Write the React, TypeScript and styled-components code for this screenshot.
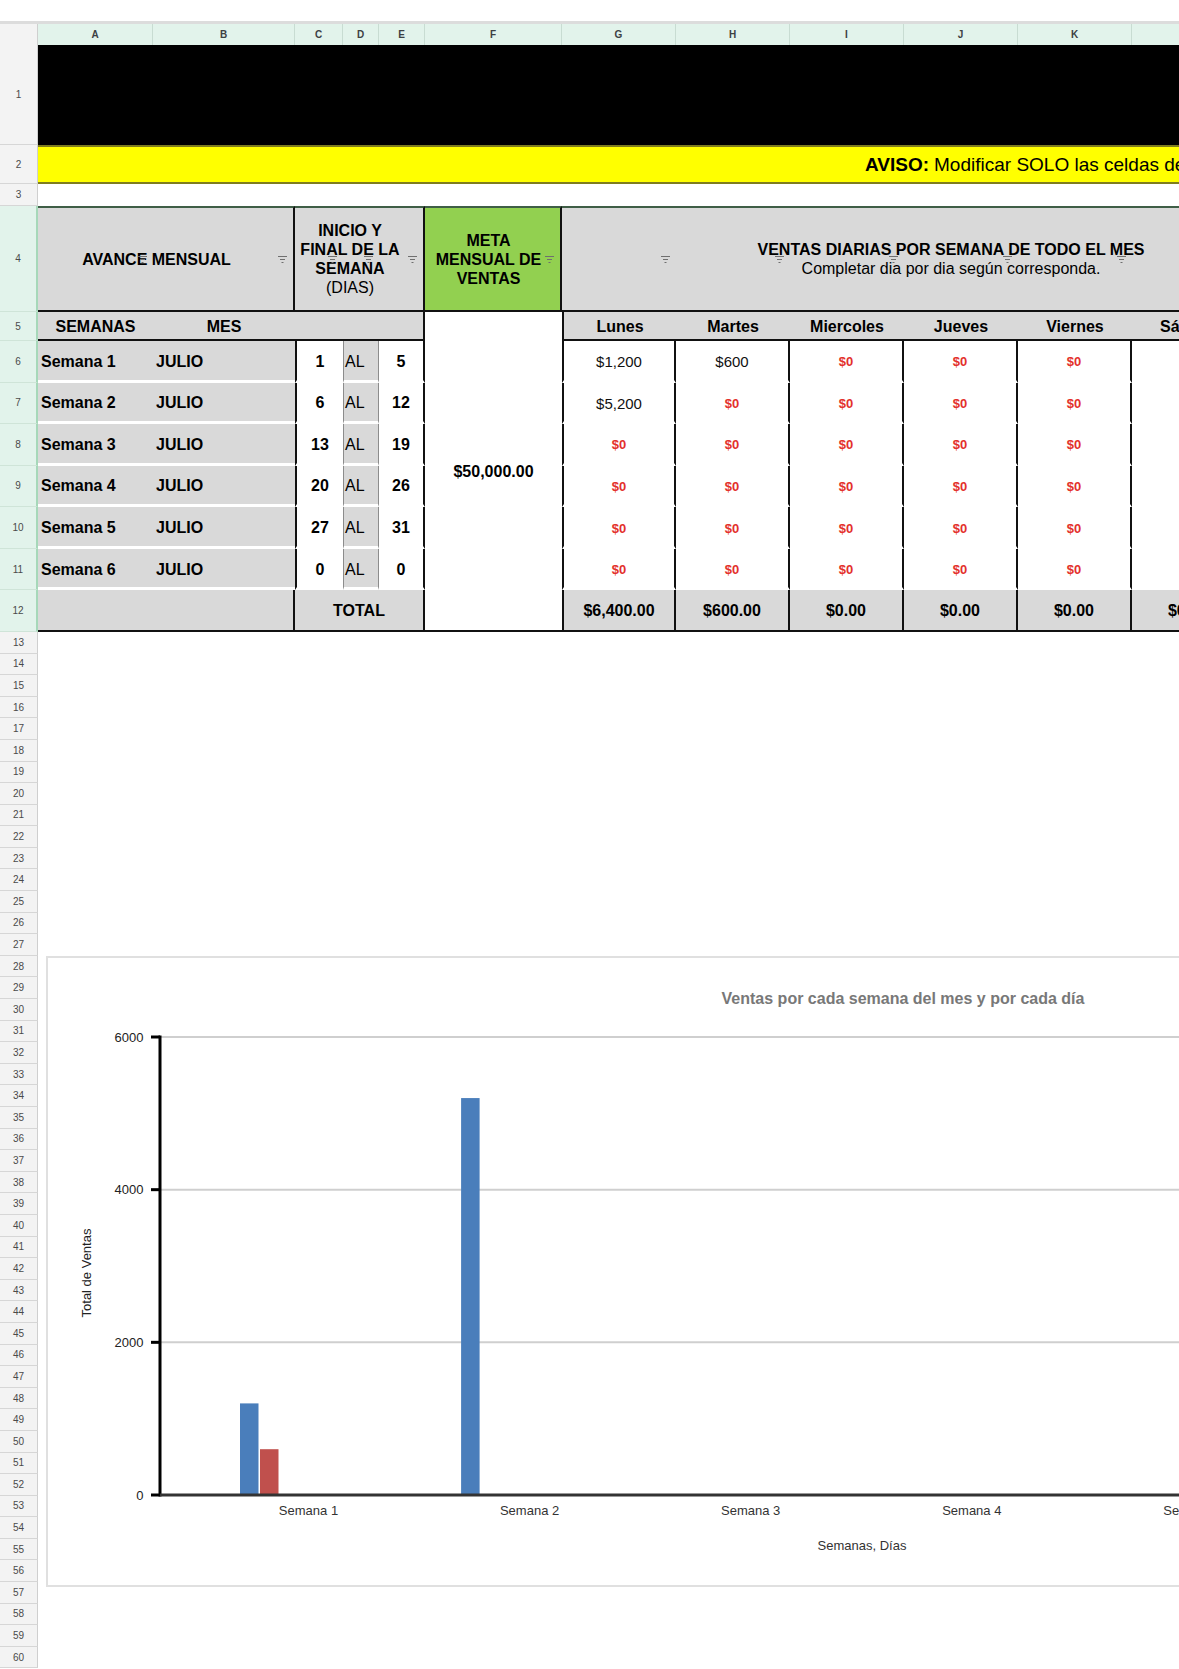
import React from 'react';
import styled, { createGlobalStyle } from 'styled-components';

const GlobalStyle = createGlobalStyle`
  *, *::before, *::after { box-sizing: border-box; }
  html, body { margin: 0; padding: 0; background: #fff; }
  body {
    font-family: 'Liberation Sans', Arial, Helvetica, sans-serif;
    color: #000;
    overflow: hidden;
  }
`;

// widths of columns A..M
const COLS = [115, 142, 48, 36, 46, 137, 114, 114, 114, 114, 114, 114, 114];
const LETTERS = ['A', 'B', 'C', 'D', 'E', 'F', 'G', 'H', 'I', 'J', 'K', 'L', 'M'];
const colTemplate = COLS.map((w) => `${w}px`).join(' ');

const DAYS = ['Lunes', 'Martes', 'Miercoles', 'Jueves', 'Viernes', 'Sábado', 'Domingo'];

const WEEKS = [
  { name: 'Semana 1', from: 1, to: 5, sales: [1200, 600, 0, 0, 0, 0, 0] },
  { name: 'Semana 2', from: 6, to: 12, sales: [5200, 0, 0, 0, 0, 0, 0] },
  { name: 'Semana 3', from: 13, to: 19, sales: [0, 0, 0, 0, 0, 0, 0] },
  { name: 'Semana 4', from: 20, to: 26, sales: [0, 0, 0, 0, 0, 0, 0] },
  { name: 'Semana 5', from: 27, to: 31, sales: [0, 0, 0, 0, 0, 0, 0] },
  { name: 'Semana 6', from: 0, to: 0, sales: [0, 0, 0, 0, 0, 0, 0] },
];

const META = 50000;

const money = (n: number) => '$' + n.toLocaleString('en-US');
const moneyFixed = (n: number) =>
  '$' + n.toLocaleString('en-US', { minimumFractionDigits: 2, maximumFractionDigits: 2 });

const Page = styled.div`
  position: relative;
  width: 1179px;
  height: 1669px;
  overflow: hidden;
  background: #fff;
`;

const TopBar = styled.div`
  height: 24px;
  border-bottom: 3px solid #dcdcdc;
`;

const Sheet = styled.div`
  display: grid;
  grid-template-columns: 38px ${colTemplate};
  grid-template-rows: 21px 100px 39px 22px 106px 29px repeat(7, 41.57px) repeat(48, 21.6px);
  width: max-content;
`;

const Corner = styled.div`
  background: #f3f3f3;
  border-right: 1px solid #cfcfcf;
`;

const ColHead = styled.div`
  display: flex;
  align-items: center;
  justify-content: center;
  background: #e2f3eb;
  border-right: 1px solid #c8dcd2;
  font-size: 10px;
  font-weight: 700;
  color: #3c4043;
`;

const RowHead = styled.div<{ $active?: boolean }>`
  display: flex;
  align-items: center;
  justify-content: center;
  background: ${(p) => (p.$active ? '#e2f3eb' : '#f3f3f3')};
  border-bottom: 1px solid ${(p) => (p.$active ? '#cfe4d8' : '#d6d6d6')};
  border-right: ${(p) => (p.$active ? '2px solid #a6d8b9' : '1px solid #cfcfcf')};
  font-size: 10px;
  color: #4a4a4a;
`;

const Banner = styled.div`
  grid-column: span 13;
  background: #000;
`;

const Notice = styled.div`
  grid-column: span 13;
  display: flex;
  align-items: center;
  padding-left: 827px;
  background: #ffff00;
  border-top: 2px solid #7f7d1f;
  border-bottom: 2px solid #7f7d1f;
  font-size: 19px;
  white-space: nowrap;

  b {
    font-weight: 700;
    margin-right: 5px;
  }
`;

const Blank = styled.div`
  grid-column: span 13;
  background: #fff;
`;

const HeadCell = styled.div<{ $span: number; $green?: boolean; $padR?: number }>`
  position: relative;
  grid-column: span ${(p) => p.$span};
  display: flex;
  flex-direction: column;
  align-items: center;
  justify-content: center;
  padding: 0 ${(p) => p.$padR ?? 20}px 0 2px;
  background: ${(p) => (p.$green ? '#92d050' : '#d9d9d9')};
  border-top: 2px solid #3f5e46;
  border-bottom: 2px solid #111;
  border-right: 2px solid #111;
  font-size: 16px;
  font-weight: 700;
  line-height: 19px;
  text-align: center;
  white-space: nowrap;
`;

const Thin = styled.span`
  font-weight: 400;
`;

const FilterLayer = styled.div<{ $cols: string }>`
  position: absolute;
  inset: 0;
  display: grid;
  grid-template-columns: ${(p) => p.$cols};
  pointer-events: none;
`;

const FilterSlot = styled.div`
  display: flex;
  align-items: center;
  justify-content: flex-end;
  padding-right: 6px;
`;

const SubHead = styled.div<{ $span?: number; $edge?: 'left' | 'right' }>`
  grid-column: span ${(p) => p.$span ?? 1};
  display: flex;
  align-items: center;
  justify-content: center;
  padding-top: 2px;
  background: #d9d9d9;
  border-bottom: 2px solid #111;
  ${(p) => (p.$edge ? `border-${p.$edge}: 2px solid #111;` : '')}
  font-size: 16px;
  font-weight: 700;
  white-space: nowrap;
`;

const GoalCell = styled.div`
  grid-row: span 8;
  display: flex;
  align-items: center;
  justify-content: center;
  padding-top: 2px;
  background: #fff;
  border-bottom: 2px solid #111;
  font-size: 16px;
  font-weight: 700;
`;

const WeekCell = styled.div`
  display: flex;
  align-items: center;
  padding: 3px 0 0 3px;
  background: #d9d9d9;
  border-bottom: 3px solid #fff;
  font-size: 16px;
  font-weight: 700;
  white-space: nowrap;
`;

const DayNum = styled.div<{ $side: 'left' | 'right' }>`
  display: flex;
  align-items: center;
  justify-content: center;
  padding-top: 3px;
  background: #fff;
  border-${(p) => p.$side}: 2px solid #111;
  border-bottom: 3px solid #fff;
  font-size: 16px;
  font-weight: 700;
`;

const AlCell = styled.div`
  display: flex;
  align-items: center;
  padding: 3px 0 0 1px;
  background: #d9d9d9;
  border-left: 1px solid #8c8c8c;
  border-right: 1px solid #8c8c8c;
  border-bottom: 3px solid #fff;
  font-size: 16px;
`;

const SaleCell = styled.div<{ $first?: boolean; $zero?: boolean }>`
  display: flex;
  align-items: center;
  justify-content: center;
  padding-top: 3px;
  background: #fff;
  border-right: 2px solid #111;
  ${(p) => (p.$first ? 'border-left: 2px solid #111;' : '')}
  border-bottom: 3px solid #fff;
  font-size: ${(p) => (p.$zero ? '13px' : '15px')};
  font-weight: ${(p) => (p.$zero ? 700 : 400)};
  color: ${(p) => (p.$zero ? '#e3302b' : '#111')};
`;

const TotalCell = styled.div<{ $span?: number; $first?: boolean }>`
  grid-column: span ${(p) => p.$span ?? 1};
  display: flex;
  align-items: center;
  justify-content: center;
  padding-top: 2px;
  background: #d9d9d9;
  border-right: 2px solid #111;
  border-bottom: 2px solid #111;
  ${(p) => (p.$first ? 'border-left: 2px solid #111;' : '')}
  font-size: 16px;
  font-weight: 700;
  white-space: nowrap;
`;

const EmptyRow = styled.div`
  grid-column: span 13;
  background: #fff;
`;

const ChartCard = styled.div`
  position: absolute;
  left: 46px;
  top: 956px;
  width: 1300px;
  height: 631px;
  background: #fff;
  border: 2px solid #e0e0e0;

  svg {
    display: block;
  }
  text {
    font-family: 'Liberation Sans', Arial, Helvetica, sans-serif;
  }
`;

function FilterIcon() {
  return (
    <svg width="9" height="7" viewBox="0 0 9 7">
      <path d="M0 0.5h9M2 3.5h5M3.5 6.5h2" stroke="#6f6f6f" strokeWidth="1" />
    </svg>
  );
}

// one filter button at the right edge of every column under a merged header
function Filters({ cols }: { cols: number[] }) {
  const template = cols.map((w, i) => (i === cols.length - 1 ? '1fr' : `${w}px`)).join(' ');
  return (
    <FilterLayer $cols={template}>
      {cols.map((_, i) => (
        <FilterSlot key={i}>
          <FilterIcon />
        </FilterSlot>
      ))}
    </FilterLayer>
  );
}

const SERIES = ['#4a7ebb', '#c0504d', '#9bbb59', '#8064a2', '#4bacc6', '#f79646', '#2c4d75'];

function SalesChart() {
  const top = 79;
  const base = 537;
  const max = 6000;
  const y = (v: number) => base - (v / max) * (base - top);
  const axisX = 112;
  const ticks = [0, 2000, 4000, 6000];
  const center = (i: number) => 260.5 + i * 221.1;

  return (
    <ChartCard>
      <svg width="1296" height="627" viewBox="0 0 1296 627">
        <text x={855} y={45.5} textAnchor="middle" fontSize="16" fontWeight="700" fill="#787878">
          Ventas por cada semana del mes y por cada día
        </text>

        {ticks.map((t) => (
          <g key={t}>
            {t > 0 && (
              <line x1={axisX} x2={1296} y1={y(t)} y2={y(t)} stroke="#cfcfcf" strokeWidth="2" />
            )}
            <line x1={103} x2={axisX} y1={y(t)} y2={y(t)} stroke="#000" strokeWidth="3" />
            <text x={95.5} y={y(t) + 4.5} textAnchor="end" fontSize="13" fill="#222">
              {t}
            </text>
          </g>
        ))}

        {WEEKS.map((w, wi) =>
          w.sales.map((v, di) =>
            v > 0 ? (
              <rect
                key={`${wi}-${di}`}
                x={center(wi) - 68.5 + di * 20}
                y={y(v)}
                width={18.5}
                height={base - y(v)}
                fill={SERIES[di]}
              />
            ) : null
          )
        )}

        <line x1={axisX} x2={axisX} y1={top - 1.5} y2={base + 1.5} stroke="#000" strokeWidth="3" />
        <line x1={axisX} x2={1296} y1={base} y2={base} stroke="#333" strokeWidth="3" />

        {WEEKS.map((w, wi) => (
          <text key={w.name} x={center(wi)} y={556.5} textAnchor="middle" fontSize="13" fill="#333">
            {w.name}
          </text>
        ))}

        <text x={814} y={591.5} textAnchor="middle" fontSize="13" fill="#333">
          Semanas, Días
        </text>
        <text
          x={38}
          y={319.5}
          textAnchor="middle"
          fontSize="13"
          fill="#222"
          transform="rotate(-90 38 315)"
        >
          Total de Ventas
        </text>
      </svg>
    </ChartCard>
  );
}

export default function App() {
  const totals = DAYS.map((_, d) => WEEKS.reduce((s, w) => s + w.sales[d], 0));
  const rows: React.ReactNode[] = [];

  rows.push(<Corner key="corner" />);
  LETTERS.forEach((l) => rows.push(<ColHead key={`c-${l}`}>{l}</ColHead>));

  // 1: black banner
  rows.push(<RowHead key="r1">1</RowHead>, <Banner key="banner" />);

  // 2: yellow notice
  rows.push(
    <RowHead key="r2">2</RowHead>,
    <Notice key="notice">
      <b>AVISO:</b>Modificar SOLO las celdas de color blanco
    </Notice>
  );

  // 3: spacer
  rows.push(<RowHead key="r3">3</RowHead>, <Blank key="blank3" />);

  // 4: section headers
  rows.push(
    <RowHead key="r4" $active>
      4
    </RowHead>,
    <HeadCell key="h-avance" $span={2}>
      AVANCE MENSUAL
      <Filters cols={COLS.slice(0, 2)} />
    </HeadCell>,
    <HeadCell key="h-inicio" $span={3}>
      <span>INICIO Y</span>
      <span>FINAL DE LA</span>
      <span>SEMANA</span>
      <Thin>(DIAS)</Thin>
      <Filters cols={COLS.slice(2, 5)} />
    </HeadCell>,
    <HeadCell key="h-meta" $span={1} $green $padR={10}>
      <span>META</span>
      <span>MENSUAL DE</span>
      <span>VENTAS</span>
      <Filters cols={COLS.slice(5, 6)} />
    </HeadCell>,
    <HeadCell key="h-ventas" $span={7}>
      <span>VENTAS DIARIAS POR SEMANA DE TODO EL MES</span>
      <Thin>Completar dia por dia según corresponda.</Thin>
      <Filters cols={COLS.slice(6)} />
    </HeadCell>
  );

  // 5: column titles
  rows.push(
    <RowHead key="r5" $active>
      5
    </RowHead>,
    <SubHead key="s-sem">SEMANAS</SubHead>,
    <SubHead key="s-mes">MES</SubHead>,
    <SubHead key="s-dias" $span={3} $edge="right" />,
    <GoalCell key="goal">{moneyFixed(META)}</GoalCell>
  );
  DAYS.forEach((d, i) =>
    rows.push(
      <SubHead key={`d-${d}`} $edge={i === 0 ? 'left' : undefined}>
        {d}
      </SubHead>
    )
  );

  // 6-11: weeks
  WEEKS.forEach((w, wi) => {
    const r = wi + 6;
    rows.push(
      <RowHead key={`r${r}`} $active>
        {r}
      </RowHead>,
      <WeekCell key={`w-${r}`}>{w.name}</WeekCell>,
      <WeekCell key={`m-${r}`}>JULIO</WeekCell>,
      <DayNum key={`f-${r}`} $side="left">
        {w.from}
      </DayNum>,
      <AlCell key={`al-${r}`}>AL</AlCell>,
      <DayNum key={`t-${r}`} $side="right">
        {w.to}
      </DayNum>
    );
    w.sales.forEach((v, di) =>
      rows.push(
        <SaleCell key={`v-${r}-${di}`} $first={di === 0} $zero={v === 0}>
          {money(v)}
        </SaleCell>
      )
    );
  });

  // 12: totals
  rows.push(
    <RowHead key="r12" $active>
      12
    </RowHead>,
    <TotalCell key="tot-blank" $span={2} />,
    <TotalCell key="tot-label" $span={3}>
      TOTAL
    </TotalCell>
  );
  totals.forEach((t, i) =>
    rows.push(
      <TotalCell key={`tot-${i}`} $first={i === 0}>
        {moneyFixed(t)}
      </TotalCell>
    )
  );

  // 13-60: empty sheet
  for (let r = 13; r <= 60; r++) {
    rows.push(<RowHead key={`r${r}`}>{r}</RowHead>, <EmptyRow key={`e${r}`} />);
  }

  return (
    <Page>
      <GlobalStyle />
      <TopBar />
      <Sheet>{rows}</Sheet>
      <SalesChart />
    </Page>
  );
}
